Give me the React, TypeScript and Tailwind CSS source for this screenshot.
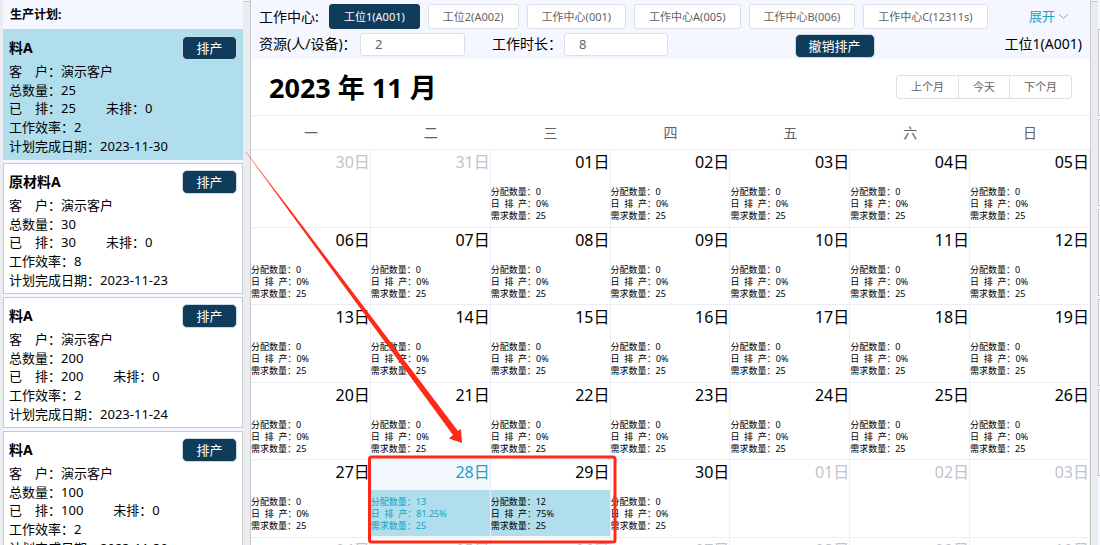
type Plan = { name: string; customer: string; total: number; done: number; left: number; rate: number; due: string };

const plans: Plan[] = [
  { name: '料A', customer: '演示客户', total: 25, done: 25, left: 0, rate: 2, due: '2023-11-30' },
  { name: '原材料A', customer: '演示客户', total: 30, done: 30, left: 0, rate: 8, due: '2023-11-23' },
  { name: '料A', customer: '演示客户', total: 200, done: 200, left: 0, rate: 2, due: '2023-11-24' },
  { name: '料A', customer: '演示客户', total: 100, done: 100, left: 0, rate: 2, due: '2023-11-30' },
];

const centers = ['工位1(A001)', '工位2(A002)', '工作中心(001)', '工作中心A(005)', '工作中心B(006)', '工作中心C(12311s)'];
const weekdays = ['一', '二', '三', '四', '五', '六', '日'];

type Day = { label: string; current: boolean; qty: string; load: string; today: boolean; busy: boolean };

const days: Day[] = Array.from({ length: 42 }, (_, i) => {
  const n = i - 1;
  const current = n >= 1 && n <= 30;
  const d = n < 1 ? n + 31 : n > 30 ? n - 30 : n;
  return {
    label: String(d).padStart(2, '0') + '日',
    current,
    qty: n === 28 ? '13' : n === 29 ? '12' : '0',
    load: n === 28 ? '81.25%' : n === 29 ? '75%' : '0%',
    today: n === 28,
    busy: n === 28 || n === 29,
  };
});
const weeks = [0, 1, 2, 3, 4, 5].map((w) => days.slice(w * 7, w * 7 + 7));

function PlanCard({ plan, active }: { plan: Plan; active: boolean }) {
  return (
    <article
      className={`h-[131px] shrink-0 border px-[5px] pt-[6px] text-[13px] text-black ${
        active ? 'border-[#b0deed] bg-[#b0deed]' : 'border-[#c8c9cc] bg-white'
      }`}
    >
      <div className="flex h-[26px] items-start justify-between">
        <h3 className="text-sm leading-6 font-bold">{plan.name}</h3>
        <button className="h-6 w-[55px] rounded-[5px] border border-[#c9d8e2] bg-[#0e3c5a] text-[13px] leading-5 text-white">排产</button>
      </div>
      <div className="grid h-[93px] grid-rows-5 items-center leading-[18px] whitespace-pre">
        <p>客　户：{plan.customer}</p>
        <p>总数量：{plan.total}</p>
        <p className="flex gap-[30px]">
          <span>已　排：{plan.done}</span>
          <span>未排：{plan.left}</span>
        </p>
        <p>工作效率：{plan.rate}</p>
        <p>计划完成日期：{plan.due}</p>
      </div>
    </article>
  );
}

function DayCell({ day }: { day: Day }) {
  const tone = day.today ? 'text-[#18a2c4]' : day.current ? 'text-black' : 'text-[#c0c4cc]';
  return (
    <td className={`border-r border-b border-[#ebeef5] p-0 align-top ${tone} ${day.today ? 'bg-[#f2f8fe]' : ''}`}>
      <div className="flex h-[30px] items-start justify-end text-base leading-6">{day.label}</div>
      {day.current && (
        <div className={`h-[46px] pt-[6px] text-[9px] leading-3 whitespace-nowrap ${day.busy ? 'bg-[#b0deed]' : ''}`}>
          <p>分配数量：{day.qty}</p>
          <p>日{'\u00a0\u00a0'}排{'\u00a0\u00a0'}产：{day.load}</p>
          <p>需求数量：25</p>
        </div>
      )}
    </td>
  );
}

export default function App() {
  return (
    <div
      lang="zh-CN"
      className="relative flex h-screen overflow-hidden bg-[#ebecf0] pl-[3px] font-['Noto_Sans','Noto_Sans_CJK_SC',sans-serif] text-black"
    >
      <aside className="flex w-60 shrink-0 flex-col bg-[#f4f7ff]">
        <h2 className="h-[29px] shrink-0 pl-[7px] text-xs leading-[30px] font-bold">生产计划:</h2>
        <div className="flex flex-col gap-[3px]">
          {plans.map((p, i) => (
            <PlanCard key={i} plan={p} active={i === 0} />
          ))}
        </div>
      </aside>

      <div className="h-[2px] w-[7px] shrink-0 border-b border-[#c8c9cc] bg-[#f4f7ff]" />

      <main className="min-w-0 flex-1 border-x border-[#c8c9cc] bg-white">
        <div className="h-[59px] bg-[#f4f7ff] px-2 pt-1 text-sm">
          <div className="flex h-[25px] items-center">
            <span className="w-[70px]">工作中心:</span>
            <nav className="flex gap-2">
              {centers.map((c, i) => (
                <button
                  key={c}
                  className={`h-[25px] rounded-[3px] border px-[14px] text-[11px] leading-[22px] whitespace-nowrap ${
                    i === 0 ? 'border-[#0e3c5a] bg-[#0e3c5a] text-white' : 'border-[#dcdfe6] bg-white text-[#606266]'
                  }`}
                >
                  {c}
                </button>
              ))}
            </nav>
            <button className="mr-[13px] ml-auto flex items-center gap-[3px] text-[13px] text-[#18a2c4]">
              展开
              <svg width="11" height="7" viewBox="0 0 11 7" fill="none" stroke="#5cb8d0" strokeWidth="1" aria-hidden="true">
                <path d="M1 1l4.500 4.500L10 1" />
              </svg>
            </button>
          </div>
          <div className="flex h-[30px] items-center">
            <label htmlFor="resource" className="w-[101px] whitespace-nowrap">资源(人/设备)：</label>
            <input id="resource" defaultValue="2" className="h-[23px] w-[105px] rounded-[3px] border border-[#dcdfe6] bg-white px-[14px] text-[13px] text-[#606266]" />
            <label htmlFor="hours" className="ml-[27px] w-[72px] whitespace-nowrap">工作时长：</label>
            <input id="hours" defaultValue="8" className="h-[23px] w-[104px] rounded-[3px] border border-[#dcdfe6] bg-white px-[14px] text-[13px] text-[#606266]" />
            <button className="mt-[3px] ml-auto h-6 w-20 rounded-[5px] border border-[#c9d8e2] bg-[#0e3c5a] text-[13px] leading-5 text-white">撤销排产</button>
            <span className="ml-[130px]">工位1(A001)</span>
          </div>
        </div>

        <div className="flex h-14 items-center justify-between px-[18px]">
          <h1 className="pt-[2px] text-[27px] leading-9 font-bold">2023 年 11 月</h1>
          <div className="flex text-[11px] text-[#606266]">
            <button className="h-6 rounded-l-[3px] border border-[#dcdfe6] px-[14px] leading-5">上个月</button>
            <button className="-ml-px h-6 border border-[#dcdfe6] px-[14px] leading-5">今天</button>
            <button className="-ml-px h-6 rounded-r-[3px] border border-[#dcdfe6] px-[14px] leading-5">下个月</button>
          </div>
        </div>

        <table className="h-[500px] w-full table-fixed border-separate border-spacing-0 border-t border-[#ebeef5]">
          <thead>
            <tr className="h-[34px]">
              {weekdays.map((w) => (
                <th key={w} className="border-b border-[#ebeef5] p-0 text-sm font-normal text-[#606266]">{w}</th>
              ))}
            </tr>
          </thead>
          <tbody>
            {weeks.map((week, i) => (
              <tr key={i} className="h-[77px]">
                {week.map((d, j) => (
                  <DayCell key={j} day={d} />
                ))}
              </tr>
            ))}
          </tbody>
        </table>
      </main>

      <div className="h-[2px] w-[7px] shrink-0 border-b border-[#c8c9cc] bg-[#f4f7ff]" />

      <aside className="flex w-[2px] shrink-0 flex-col gap-[3px] bg-[#f4f7ff] pt-[29px]">
        {[0, 1, 2, 3, 4].map((n) => (
          <div key={n} className="h-[87px] shrink-0 border border-r-0 border-[#c8c9cc] bg-white" />
        ))}
      </aside>

      <svg className="pointer-events-none absolute top-0 left-0" width="640" height="545" viewBox="0 0 640 545" aria-hidden="true">
        <defs>
          <linearGradient id="fade" x1="246" y1="152" x2="290" y2="210" gradientUnits="userSpaceOnUse">
            <stop offset="0" stopColor="#fe2a17" stopOpacity="0.5" />
            <stop offset="1" stopColor="#fe2a17" />
          </linearGradient>
        </defs>
        <path d="M245.800 152.200L246.500 152L458 431L461 429L462 443L449 438.500L453 435Z" fill="url(#fade)" />
        <rect x="369.500" y="457" width="245.500" height="85" rx="2" fill="none" stroke="#fe2a17" strokeWidth="3" />
      </svg>
    </div>
  );
}
